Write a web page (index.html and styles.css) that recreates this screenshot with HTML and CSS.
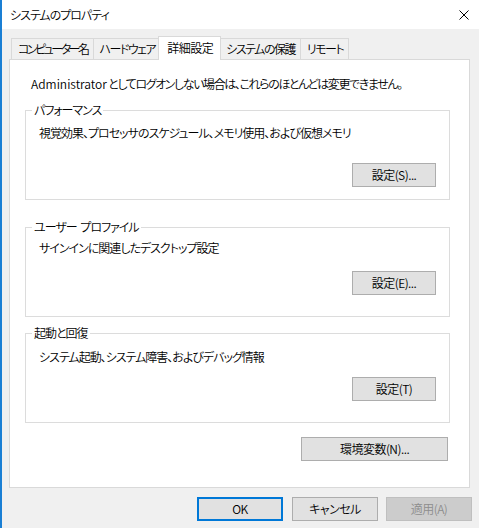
FILE: index.html
```html
<!DOCTYPE html>
<html lang="ja">
<head>
<meta charset="utf-8">
<title>システムのプロパティ</title>
<link rel="stylesheet" href="styles.css">
</head>
<body>
<div class="window">
  <div class="titlebar">
    <span class="title">システムのプロパティ</span>
    <svg class="close" width="10" height="10" viewBox="0 0 10 10"><path d="M0.5 0.5L9.5 9.5M9.5 0.5L0.5 9.5" stroke="#000" stroke-width="1" fill="none"/></svg>
  </div>
  <div class="tabs">
    <div class="tab">コンピューター名</div>
    <div class="tab">ハードウェア</div>
    <div class="tab active">詳細設定</div>
    <div class="tab">システムの保護</div>
    <div class="tab">リモート</div>
  </div>
  <div class="panel">
    <p class="note"><span class="latin">Administrator</span> としてログオンしない場合は、これらのほとんどは変更できません。</p>
    <fieldset class="group g1">
      <legend>パフォーマンス</legend>
      <p class="desc">視覚効果、プロセッサのスケジュール、メモリ使用、および仮想メモリ</p>
      <div class="actions"><button class="btn">設定(S)...</button></div>
    </fieldset>
    <fieldset class="group g2">
      <legend>ユーザー プロファイル</legend>
      <p class="desc">サインインに関連したデスクトップ設定</p>
      <div class="actions"><button class="btn">設定(E)...</button></div>
    </fieldset>
    <fieldset class="group g3">
      <legend>起動と回復</legend>
      <p class="desc">システム起動、システム障害、およびデバッグ情報</p>
      <div class="actions"><button class="btn">設定(T)</button></div>
    </fieldset>
    <div class="env"><button class="btn wide">環境変数(N)...</button></div>
  </div>
  <div class="footer">
    <button class="btn dlg primary">OK</button>
    <button class="btn dlg">キャンセル</button>
    <button class="btn dlg" disabled>適用(A)</button>
  </div>
</div>
</body>
</html>
```
FILE: styles.css
```css
html, body {
  margin: 0;
  padding: 0;
  background: #f0f0f0;
}
body {
  font-family: "Noto Sans CJK JP", "Noto Sans", sans-serif;
  font-size: 12px;
  font-weight: 350;
  font-feature-settings: "palt";
  letter-spacing: -1px;
  color: #000;
}
.latin {
  letter-spacing: 0;
}
.window {
  box-sizing: border-box;
  height: 528px;
  border-left: 2px solid #1a7fd4;
  display: flex;
  flex-direction: column;
}
.titlebar {
  height: 29px;
  flex: none;
  background: #fff;
  display: flex;
  align-items: center;
  justify-content: space-between;
  padding: 0 10px 0 8px;
}
.title {
  line-height: 16px;
}
.close {
  display: block;
}
.tabs {
  flex: none;
  display: flex;
  align-items: flex-end;
  margin: 7px 0 0 9px;
  height: 23px;
  position: relative;
  z-index: 1;
}
.tab {
  box-sizing: border-box;
  height: 21px;
  line-height: 19px;
  padding: 0 5px 0 6px;
  border: 1px solid #d9d9d9;
  border-bottom: none;
  background: #f0f0f0;
  margin-left: -1px;
  white-space: nowrap;
  letter-spacing: -1.5px;
}
.tab:first-child {
  margin-left: 0;
  letter-spacing: -2.5px;
}
.tab.active {
  height: 24px;
  margin: 0 -2px -1px -3px;
  padding: 0 7px 0 8px;
  line-height: 21px;
  background: #fff;
  position: relative;
  z-index: 2;
  letter-spacing: -0.5px;
}
.tab.active + .tab {
  margin-left: 0;
}
.panel {
  flex: 1;
  margin: 0 9px 0 7px;
  background: #fff;
  border: 1px solid #d9d9d9;
  display: flex;
  flex-direction: column;
}
.note {
  margin: 16px 0 0 21px;
  line-height: 16px;
  letter-spacing: -1.4px;
}
.group {
  margin: 10px 19px 0 15px;
  padding: 0;
  min-width: 0;
  border: 1px solid #dcdcdc;
}
.group legend {
  margin-left: 6px;
  padding: 0 2px;
  line-height: 16px;
  word-spacing: 2px;
}
.desc {
  margin: 7px 0 0 13px;
  line-height: 16px;
}
.actions {
  display: flex;
  justify-content: flex-end;
  padding-right: 13px;
  margin-top: 22px;
  margin-bottom: 12px;
}
.g2 { margin-top: 19px; }
.g2 .desc { margin-top: 5px; }
.g2 .actions { margin-top: 15px; margin-bottom: 21px; }
.g3 { margin-top: 8px; }
.g3 .desc { margin-top: 8px; }
.g3 .actions { margin-top: 12px; margin-bottom: 21px; }
.btn {
  box-sizing: border-box;
  width: 84px;
  height: 24px;
  padding: 0;
  margin: 0;
  background: #e1e1e1;
  border: 1px solid #adadad;
  font: inherit;
  font-feature-settings: "palt";
  letter-spacing: -0.5px;
  color: #000;
  line-height: 20px;
}
.env {
  display: flex;
  justify-content: flex-end;
  margin: 14px 21px 0 0;
}
.btn.wide {
  width: 147px;
}
.footer {
  flex: none;
  display: flex;
  justify-content: flex-end;
  gap: 8px;
  padding: 9px 7px 7px 0;
}
.btn.dlg {
  width: 86px;
}
.btn.primary {
  border: 2px solid #0078d7;
  margin-right: 1px;
}
.btn:disabled {
  background: #cccccc;
  border-color: #bfbfbf;
  color: #8d8d8d;
}
```
